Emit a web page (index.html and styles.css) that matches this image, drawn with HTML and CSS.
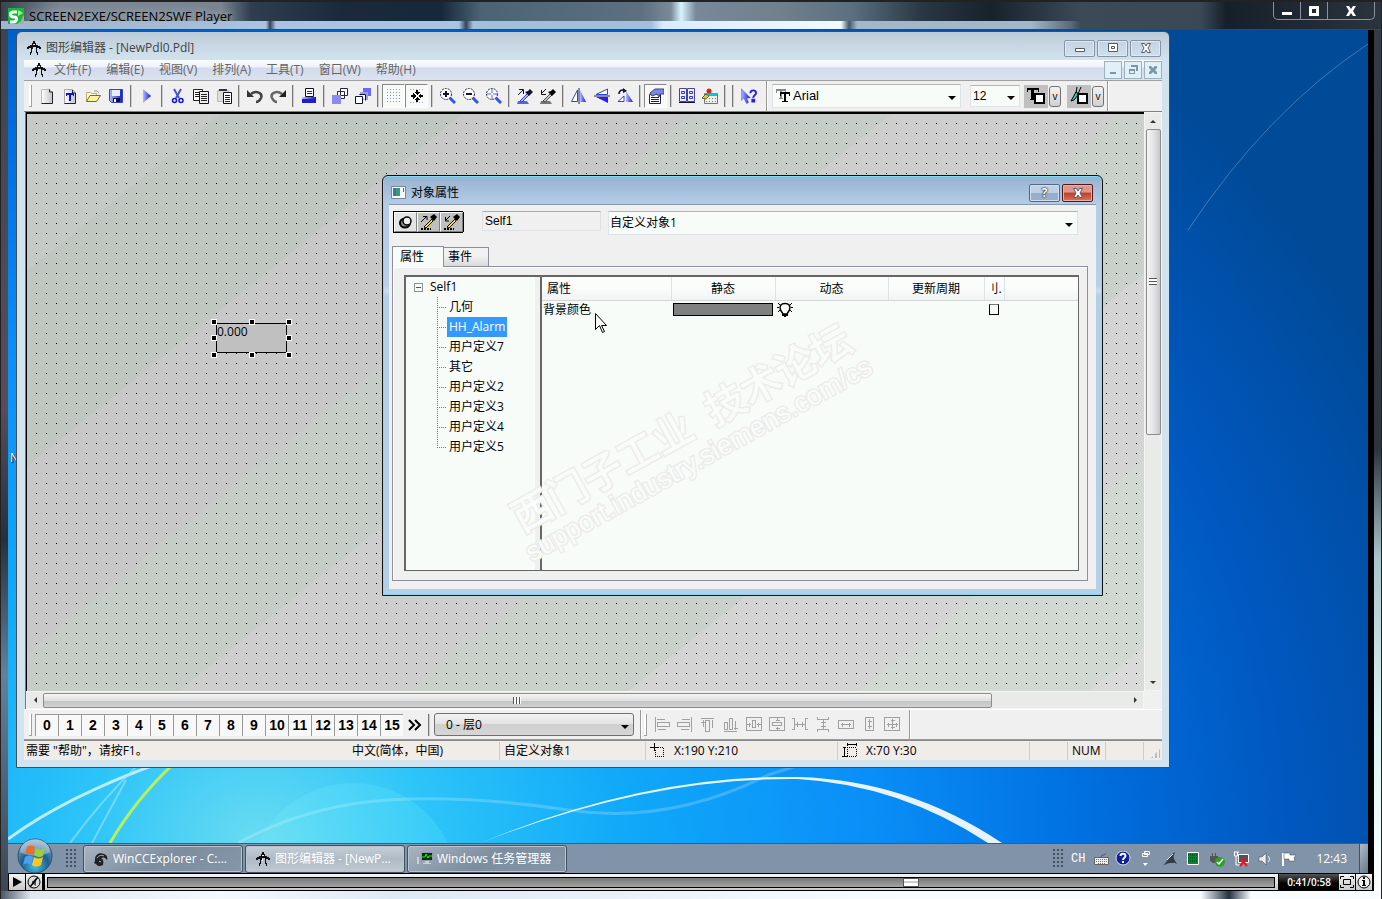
FILE: index.html
```
<!DOCTYPE html>
<html lang="zh-CN">
<head>
  <title>SCREEN2EXE/SCREEN2SWF Player</title>
  <meta charset="UTF-8" />
  <link rel="stylesheet" href="styles.css">
</head>
<body>
  <!-- Icon set -->
  <svg class="defs" width="0" height="0" aria-hidden="true">
    <defs>
      <linearGradient id="gBlue" x1="0" x2="1"><stop offset="0" stop-color="#b4bcff"/><stop offset="1" stop-color="#1414d8"/></linearGradient>
      <linearGradient id="gGrey" x1="0" x2="1"><stop offset="0" stop-color="#fff"/><stop offset="1" stop-color="#c4c4c4"/></linearGradient>
      <radialGradient id="gOrb" cx=".5" cy=".8" r=".8"><stop offset="0" stop-color="#3fc3e8"/><stop offset=".5" stop-color="#1d5f92"/><stop offset="1" stop-color="#8fb0c6"/></radialGradient>
    </defs>
    <symbol id="i-app" viewBox="0 0 16 16"><path d="M7 1h2v2h1v2h2v1h2v1h1v2h-2V8h-2v4h1v3h-1v-2h-1V7H7v2H6v4H5v2H4v-3h1V8H3v1H1V7h1V6h2V5h2V3h1z" fill="#111"/><path d="M7 4h2v1H7zM7 8h1v2H7z" fill="#fff"/></symbol>
    <symbol id="i-new" viewBox="0 0 16 16"><path d="M2.5.5h8l3 3v12h-11z" fill="url(#gGrey)"/><path d="M10.500 1v3h3v11.500h-11" fill="none" stroke="#223"/><path d="M2.500 15V1.500h8" fill="none" stroke="#bbb"/></symbol>
    <symbol id="i-newt" viewBox="0 0 16 16"><path d="M2.500 1.500h8l3 3v11h-11z" fill="url(#gGrey)" stroke="#aaa"/><path d="M10.500 2v3h3v10.500h-11" fill="none" stroke="#223"/><path d="M4 5h8v3h-1V7H9v6H7V7H5v1H4z" fill="#11d"/></symbol>
    <symbol id="i-open" viewBox="0 0 16 16"><path d="M1.500 13V4.500h4l1 1h5v2" fill="#fffbd8" stroke="#b9ac6a"/><path d="M1.500 13.500 5 7.500h10.500l-4 6z" fill="#fff3a0" stroke="#776a33"/><path d="M9 3h3l2 2" fill="none" stroke="#999"/></symbol>
    <symbol id="i-save" viewBox="0 0 16 16"><path d="M1.500 1.500h13v13h-11l-2-2z" fill="url(#gBlue)" stroke="#34c"/><path d="M4 2h8v6H4z" fill="#e8ecff"/><path d="M5 10h7v4H5z" fill="#113"/><path d="M6 11h2v3H6z" fill="#fff"/></symbol>
    <symbol id="i-run" viewBox="0 0 16 16"><path d="M4 1v14l8-7z" fill="url(#gBlue)"/></symbol>
    <symbol id="i-cut" viewBox="0 0 16 16"><path d="M4 1l5 9M11 1 6 10" stroke="#45c" stroke-width="2"/><circle cx="4.500" cy="12.500" r="2" fill="none" stroke="#11d" stroke-width="1.500"/><circle cx="11" cy="12.500" r="2" fill="none" stroke="#11d" stroke-width="1.500"/></symbol>
    <symbol id="i-copy" viewBox="0 0 16 16"><path d="M.5 1.500h9v11h-9z" fill="#fff" stroke="#222"/><path d="M6.500 3.500h9v12h-9z" fill="#eee" stroke="#113"/><path d="M2 4.500h4M2 6.500h4M2 8.500h4M8 6.500h6M8 8.500h6M8 10.500h6M8 12.500h6" stroke="#222"/></symbol>
    <symbol id="i-paste" viewBox="0 0 16 16"><path d="M1.500 2.500h11v11h-11z" fill="#ddd" stroke="#bbb"/><path d="M3 3V1h8v2z" fill="#333"/><path d="M7.500 4.500h8v11h-8z" fill="#fff" stroke="#112"/><path d="M9 7.500h5M9 9.500h5M9 11.500h5M9 13.500h5" stroke="#222"/></symbol>
    <symbol id="i-undo" viewBox="0 0 16 16"><path d="M4 6c5-4 12-1 10 4-1 2-3 4-5 4" fill="none" stroke="#444" stroke-width="2.500"/><path d="M0 2v7h7z" fill="#333"/></symbol>
    <symbol id="i-redo" viewBox="0 0 16 16"><path d="M12 6C7 2 0 5 2 10c1 2 3 4 5 4" fill="none" stroke="#666" stroke-width="2.500"/><path d="M16 2v7H9z" fill="#222"/></symbol>
    <symbol id="i-print" viewBox="0 0 16 16"><path d="M4.500.5h8v8h-8z" fill="#fff" stroke="#113"/><path d="M6 3.500h5M6 5.500h5" stroke="#333"/><path d="M1 9h14v3H1z" fill="url(#gBlue)"/><path d="M1 11h14v4H1z" fill="#2020c8"/></symbol>
    <symbol id="i-front" viewBox="0 0 16 16"><path d="M8.500.5h7v7h-7zM5.500 3.500h7v7h-7z" fill="#fff" stroke="#224"/><path d="M0 7h9v9H0z" fill="#8a8cf4"/></symbol>
    <symbol id="i-back" viewBox="0 0 16 16"><path d="M8 0h8v8H8z" fill="#6a6af4"/><path d="M5 4h8v8H5z" fill="#9a9af8"/><path d="M.5 8.500h7v7h-7zM4.500 6.500h6v6" fill="#fff" stroke="#113"/></symbol>
    <symbol id="i-grid" viewBox="0 0 16 16"><path d="M1 1.500h15M1 4.500h15M1 7.500h15M1 10.500h15M1 13.500h15" stroke="#8a94b8" stroke-dasharray="1 2"/></symbol>
    <symbol id="i-snap" viewBox="0 0 16 16"><path d="M1 1.500h15M1 14.500h15" stroke="#a0a8c8" stroke-dasharray="1 2"/><path d="M8 7 5 4h2V2h2v2h2zM8 9l-3 3h2v2h2v-2h2zM7 8 4 5v2H2v2h2v2zM9 8l3-3v2h2v2h-2v2z" fill="#000"/><path d="M7 7h2v2H7z" fill="#fff"/></symbol>
    <symbol id="i-zin" viewBox="0 0 16 16"><path d="m9 9 6 6" stroke="#35e" stroke-width="3"/><circle cx="6" cy="6" r="5.500" fill="#fff" stroke="#224" stroke-dasharray="2 1"/><path d="M3 6h6M6 3v6" stroke="#113" stroke-width="2"/></symbol>
    <symbol id="i-zout" viewBox="0 0 16 16"><path d="m9 9 6 6" stroke="#35e" stroke-width="3"/><circle cx="6" cy="6" r="5.500" fill="#fff" stroke="#224" stroke-dasharray="2 1"/><path d="M3 6h6" stroke="#113" stroke-width="2"/></symbol>
    <symbol id="i-zarea" viewBox="0 0 16 16"><path d="m9 9 6 6" stroke="#35e" stroke-width="3"/><circle cx="6" cy="6" r="5.500" fill="#fff" stroke="#224" stroke-dasharray="2 1"/><path d="M6 1v4M6 7v4M1 6h4M7 6h4" stroke="#55e"/></symbol>
    <symbol id="i-pick" viewBox="0 0 16 16"><path d="M1 13h9l2 3H0z" fill="#5566dd"/><path d="m3 13 8-8 1 2-7 7z" fill="#aab4ff" stroke="#34c"/><path d="m8 4 4 4 4-4-3-3-2 2z" fill="#113"/><path d="m1 7 5-5M2 1.500h4.500V6" fill="none" stroke="#113"/></symbol>
    <symbol id="i-drop" viewBox="0 0 16 16"><path d="M1 13h9l2 3H0z" fill="#777"/><path d="m3 13 8-8 1 2-7 7z" fill="#ccc" stroke="#444"/><path d="m8 4 4 4 4-4-3-3-2 2z" fill="#000"/><path d="M6 1 1 6M1.500 2v4.500H6" fill="none" stroke="#111"/></symbol>
    <symbol id="i-fliph" viewBox="0 0 16 16"><path d="M6.500 2v11.500h-6z" fill="#fff" stroke="#34c"/><path d="M8 0v16" stroke="#225"/><path d="M9 2v12h6z" fill="url(#gBlue)"/></symbol>
    <symbol id="i-flipv" viewBox="0 0 16 16"><path d="M13.500 1v5.500H2z" fill="#fff" stroke="#34c"/><path d="M0 8h16" stroke="#225"/><path d="M14 9v6L2 9z" fill="#22e"/></symbol>
    <symbol id="i-rot" viewBox="0 0 16 16"><path d="M1 13.500 7 8v5.500z" fill="#fff" stroke="#34c"/><path d="M9 3v11h7z" fill="url(#gBlue)"/><path d="M2 6c0-4 4-5 6-3" fill="none" stroke="#113" stroke-width="1.500"/><path d="M6 0v5l4-2z" fill="#113"/></symbol>
    <symbol id="i-props" viewBox="0 0 16 16"><path d="M1.500 6.500h11v9h-11z" fill="#fff" stroke="#224"/><path d="M3 9.500h8M3 11.500h8M3 13.500h8" stroke="#222"/><path d="M2 5 7 1h9v5h-4l-1 3-2-3-5 2z" fill="#7788ee" stroke="#446"/></symbol>
    <symbol id="i-lib" viewBox="0 0 16 16"><path d="M.5.5h7v13h-7zM8.500.5h7v13h-7z" fill="#eef" stroke="#449"/><path d="M0 14.500h16" stroke="#114"/><path d="M2.500 3.500h3v2h-3zM2.500 8.500h3v2h-3zM10.500 3.500h3v2h-3zM10.500 8.500h3v2h-3z" fill="none" stroke="#33d"/></symbol>
    <symbol id="i-dyn" viewBox="0 0 16 16"><path d="M2.500 5.500h13v10h-13z" fill="#eee" stroke="#777"/><path d="M3 5h12v3H3z" fill="#0cc"/><path d="M4 10.500h10M4 13.500h10" stroke="#777" stroke-dasharray="1 2"/><circle cx="7" cy="3" r="2.500" fill="#d22"/><path d="m0 10 4-4 3 2-3 3z" fill="#dc2" stroke="#663"/></symbol>
    <symbol id="i-help" viewBox="0 0 17 16"><path d="M0 0v13l3-3 3 6 2-1-2-5h4z" fill="url(#gBlue)" stroke="#34c" stroke-width=".5"/><path d="M10 5c0-4 6-4 6 0 0 2-3 2-3 5M12 12h2v2h-2z" fill="none" stroke="#22e" stroke-width="2"/></symbol>
    <symbol id="i-tt" viewBox="0 0 16 16"><path d="M1 1h10v4h-1V3H7v7h1v1H4v-1h1V3H2v2H1z" fill="#888"/><path d="M5 4h10v4h-1V6h-3v7h2v1H7v-1h2V6H6v2H5z" fill="#000"/></symbol>
    <symbol id="i-tbox" viewBox="0 0 20 20"><path d="M1 2h12v4h-1V4H8v9h2v1H4v-1h1V4H2v2H1z" fill="#000"/><path d="M9 8h9v9H9z" fill="#fff" stroke="#000" stroke-width="2"/></symbol>
    <symbol id="i-pen" viewBox="0 0 20 20"><path d="m2 15 5-9 3 2-5 6z" fill="#2cc" stroke="#000"/><path d="M7 7 8 1M9 8l3-7" stroke="#000"/><path d="M9 8h9v9H9z" fill="#fff" stroke="#000" stroke-width="2"/></symbol>
    <symbol id="i-pin" viewBox="0 0 18 16"><ellipse cx="8" cy="9" rx="5" ry="4.500" fill="#888" stroke="#000" stroke-width="2"/><circle cx="10" cy="7" r="4" fill="#eee" stroke="#000" stroke-width="1.500"/></symbol>
    <symbol id="i-ypick" viewBox="0 0 18 16"><path d="M1 15h10" stroke="#000" stroke-dasharray="2 1" stroke-width="2"/><path d="m4 13 8-8 1 2-7 7z" fill="#fe2" stroke="#000"/><path d="m10 3 4 4 3-4-3-3z" fill="#000"/><path d="m1 8 5-5M3 2.500h4V6" fill="none" stroke="#000"/></symbol>
    <symbol id="i-ydrop" viewBox="0 0 18 16"><path d="M1 15h10" stroke="#000" stroke-dasharray="2 1" stroke-width="2"/><path d="m4 13 8-8 1 2-7 7z" fill="#fe2" stroke="#000"/><path d="m10 3 4 4 3-4-3-3z" fill="#000"/><path d="M7 2 3 6M2.500 3v4H6" fill="none" stroke="#000"/></symbol>
    <symbol id="i-dlg" viewBox="0 0 16 14"><path d="M.5.5h14v12H.5z" fill="#f4f8f8" stroke="#789"/><path d="M2 2h7v8H2z" fill="#3a9a78"/><path d="M2 2h3v8H2z" fill="#3a78a8"/><path d="M12 2h1v4h-1z" fill="#285"/></symbol>
    <symbol id="i-bulb" viewBox="0 0 16 16"><path d="M6 12 3.500 8C2 4 4 1.500 8 1.500S14 4 12.500 8L10 12z" fill="#fff" stroke="#000" stroke-width="1.500"/><path d="M5 12h6v2H9v1H7v-1H5z" fill="#000"/><path d="m1 1 2 2M0 5.500h2M1 10l2-2M15 1l-2 2M14 5.500h2M15 10l-2-2" stroke="#000"/></symbol>
    <symbol id="i-al" viewBox="0 0 16 16"><path d="M1.500 0v15M3 2.500h8M3.500 5.500h12v4h-12zM3.500 12.500h8" /></symbol>
    <symbol id="i-ar" viewBox="0 0 16 16"><path d="M14.500 0v15M13 2.500H5M.5 5.500h12v4H.5zM12 12.500H4" /></symbol>
    <symbol id="i-at" viewBox="0 0 16 16"><path d="M1 1.500h13M3.500 3v7M5.500 3.500h4v11h-4zM12.500 3v8M1 5h4" /></symbol>
    <symbol id="i-ab" viewBox="0 0 16 16"><path d="M1 14.500h13M1.500 5.500h3v7h-3zM6.500 1.500h3v11h-3zM12.500 4v9M11 11h4" /></symbol>
    <symbol id="i-ch" viewBox="0 0 16 16"><path d="M.5.5h15v13H.5zM6.500 3.500h3v7h-3zM1 7.500h4M11 7.500h4M3.500 5.500v4M12.500 5.500v4" /></symbol>
    <symbol id="i-cv" viewBox="0 0 16 16"><path d="M.5.5h15v13H.5zM3.500 5.500h9v3h-9zM8.500 1v3M8.500 10v3M6.500 3h4M6.500 11.500h4" /></symbol>
    <symbol id="i-dh" viewBox="0 0 16 16"><path d="M0 1.500h2.500v11H0M16 1.500h-2.500v11H16M3 7.500h10M5.500 5v5M10.500 5v5" /></symbol>
    <symbol id="i-dv" viewBox="0 0 16 16"><path d="M2.500 0v2.500h11V0M2.500 15v-2.500h11V15M8.500 3v9M6 5.500h5M6 9.500h5" /></symbol>
    <symbol id="i-sw" viewBox="0 0 16 16"><path d="M.5 3.500h15v8H.5zM3 7.500h10M4.500 5.500v4M11.500 5.500v4" /></symbol>
    <symbol id="i-sh" viewBox="0 0 16 16"><path d="M4.500.5h8v13h-8zM8.500 2v10M6.500 4.500h4M6.500 9.500h4" /></symbol>
    <symbol id="i-sb" viewBox="0 0 16 16"><path d="M.5.5h15v13H.5zM8.500 2v10M3 7.500h11M6.500 3.500h4M6.500 10.500h4M4.500 5.500v4M12.500 5.500v4" /></symbol>
    <symbol id="i-pos" viewBox="0 0 16 16"><path d="M0 4.500h8M4.500 0v8" stroke="#000"/><path d="M5 13.500h9M13.500 5v9M5.500 7v7M8 4.500h6" stroke="#000" stroke-dasharray="1 1"/></symbol>
    <symbol id="i-size" viewBox="0 0 16 16"><path d="M5 1.500h10M5.500 0v3M14.500 0v3M2.500 4v9M1 4.500h3M0 13.500h5" stroke="#000"/><path d="M5 4.500h9v9H5z" fill="none" stroke="#000" stroke-dasharray="1 1"/></symbol>
    <symbol id="i-bird" viewBox="0 0 16 16"><path d="M2 8c0-4 4-7 9-5 3 1 4 4 3 6-2-3-4-3-6-2 2 1 3 3 2 7-3 2-6 1-7-1l-2-1 1-2z" fill="#222"/><path d="M4 7c2-3 5-3 7-2M6 10l2 1" stroke="#bbb" fill="none"/></symbol>
    <symbol id="i-mon" viewBox="0 0 16 16"><path d="M4 1h12v9H4z" fill="#99a"/><path d="M5 2h10v7H5z" fill="#031"/><path d="M5 6h3l1-3 2 4 1-2h3" fill="none" stroke="#2e3"/><path d="M8 10h4v2h2v1H6v-1h2zM0 6h2v7H0z" fill="#ccd"/></symbol>
    <symbol id="i-orb" viewBox="0 0 36 36"><circle cx="18" cy="18" r="17" fill="url(#gOrb)" stroke="#34506a"/><path d="M3 14a15 13 0 0 1 30 0c-9 5-21 5-30 0z" fill="#fff" opacity=".35"/><path d="M10 9c3-2 5-2 8 0l-2 8c-3-2-5-2-8 0z" fill="#f06a2a"/><path d="M19 10c3 2 6 2 9 0l-2 8c-3 2-6 1-9-1z" fill="#9ccf3a"/><path d="M8 19c3-2 5-2 8 0l-2 8c-3-2-5-2-8 0z" fill="#4aa2ee"/><path d="M17 19c3 2 6 2 9 0l-2 8c-3 2-6 2-9 0z" fill="#fcc624"/></symbol>
  </svg>

  <div class="player">
    <header class="player-title">
      <svg class="logo" viewBox="0 0 16 16"><path d="M0 0h16v16H0z" fill="#17b83a"/><path d="M8 16c6-1 5-6 8-9v9z" fill="#aaa"/><path d="M9 4H5C1 5 2 9 6 9s3 4 0 5H2" fill="none" stroke="#fff" stroke-width="3"/><path d="m10 2 5 3-5 3z" fill="#8f8"/></svg>
      <span class="glow">SCREEN2EXE/SCREEN2SWF Player</span>
      <div class="frame-btns">
        <button aria-label="Minimize"><svg viewBox="0 0 14 12"><path d="M2 7h10v3H2z"/></svg></button>
        <button aria-label="Maximize"><svg viewBox="0 0 14 12"><path d="M2 1h10v10H2zM5 4v4h4V4z" fill-rule="evenodd"/></svg></button>
        <button class="wide" aria-label="Close"><svg viewBox="0 0 14 12"><path d="M2 1h3l2 3 2-3h3L9 6l3 5H9L7 8l-2 3H2l3-5z"/></svg></button>
      </div>
    </header>

    <div class="screen">
      <main class="desktop">
        <svg class="wallpaper" viewBox="0 0 1360 813" preserveAspectRatio="xMidYMax slice" aria-hidden="true">
          <g fill="none" stroke="#fff">
            <path d="M0 809Q60 765 160 730" stroke="#b8ecff" stroke-width="3"/>
            <path d="M62 813Q95 768 140 725M84 813 118 750" stroke="#9be4ff" stroke-width="2" opacity=".6"/>
            <path d="M102 813Q130 765 175 725" stroke="#b6f060" stroke-width="3"/>
            <path d="M230 813Q300 775 380 770T560 780 760 745L900 700" stroke-width="3" opacity=".2"/>
            <path d="M1180 200Q1260 80 1360 14" opacity=".25"/>
          </g>
          <path d="M472 813Q640 744 790 747 900 750 994 813H980Q892 755 790 749 640 747 472 813z" fill="#fff" opacity=".9"/>
          <circle cx="345" cy="858" r="105" fill="#8ff" opacity=".15"/>
        </svg>
        <span class="desk-label">N</span>

        <section class="app">
          <header class="app-title">
            <svg class="ic px"><use href="#i-app"/></svg>
            <span>图形编辑器 - [NewPdl0.Pdl]</span>
            <div class="aero-btns">
              <button aria-label="最小化"><svg viewBox="0 0 14 12"><path d="M2.500 6.500h9v3h-9z"/></svg></button>
              <button aria-label="最大化"><svg viewBox="0 0 14 12"><path d="M2.500 1.500h9v8h-9zM5.500 4.500h3v2h-3z"/></svg></button>
              <button aria-label="关闭"><svg viewBox="0 0 14 12"><path d="M2.500 1.500h3L7 4l1.500-2.500h3L9 6l2.500 4.500h-3L7 8l-1.500 2.500h-3L5 6z"/></svg></button>
            </div>
          </header>
          <nav class="menu">
            <svg class="ic px"><use href="#i-app"/></svg>
            <button>文件(F)</button><button>编辑(E)</button><button>视图(V)</button><button>排列(A)</button><button>工具(T)</button><button>窗口(W)</button><button>帮助(H)</button>
            <div class="mdi-btns">
              <button aria-label="最小化"><svg viewBox="0 0 12 12"><path d="M3 8h6v2H3z"/></svg></button>
              <button aria-label="还原"><svg viewBox="0 0 12 12"><path d="M4 1h7v6H9V3H4zM2 5h6v5H2zM3 7v2h4V7z" fill-rule="evenodd"/></svg></button>
              <button aria-label="关闭"><svg viewBox="0 0 12 12"><path d="M2 2h2l2 2 2-2h2v2L8 6l2 2v2H8L6 8l-2 2H2V8l2-2-2-2z"/></svg></button>
            </div>
          </nav>

          <div class="toolbar">
            <i class="grip"></i>
            <button aria-label="新建"><svg class="ic"><use href="#i-new"/></svg></button>
            <button aria-label="模板"><svg class="ic"><use href="#i-newt"/></svg></button>
            <button aria-label="打开"><svg class="ic"><use href="#i-open"/></svg></button>
            <button aria-label="保存"><svg class="ic"><use href="#i-save"/></svg></button>
            <i class="sep"></i>
            <button aria-label="运行"><svg class="ic"><use href="#i-run"/></svg></button>
            <i class="sep"></i>
            <button aria-label="剪切"><svg class="ic"><use href="#i-cut"/></svg></button>
            <button aria-label="复制"><svg class="ic"><use href="#i-copy"/></svg></button>
            <button aria-label="粘贴"><svg class="ic"><use href="#i-paste"/></svg></button>
            <i class="sep"></i>
            <button aria-label="撤销"><svg class="ic"><use href="#i-undo"/></svg></button>
            <button aria-label="重做"><svg class="ic"><use href="#i-redo"/></svg></button>
            <i class="sep"></i>
            <button aria-label="打印"><svg class="ic"><use href="#i-print"/></svg></button>
            <i class="sep"></i>
            <button aria-label="置前"><svg class="ic"><use href="#i-front"/></svg></button>
            <button aria-label="置后"><svg class="ic"><use href="#i-back"/></svg></button>
            <i class="sep"></i>
            <button class="down" aria-label="网格"><svg class="ic px"><use href="#i-grid"/></svg></button>
            <button class="down" aria-label="对齐网格"><svg class="ic px"><use href="#i-snap"/></svg></button>
            <i class="sep"></i>
            <button aria-label="放大"><svg class="ic"><use href="#i-zin"/></svg></button>
            <button aria-label="缩小"><svg class="ic"><use href="#i-zout"/></svg></button>
            <button aria-label="区域"><svg class="ic"><use href="#i-zarea"/></svg></button>
            <i class="sep"></i>
            <button aria-label="复制属性"><svg class="ic"><use href="#i-pick"/></svg></button>
            <button aria-label="分配属性"><svg class="ic"><use href="#i-drop"/></svg></button>
            <i class="sep"></i>
            <button aria-label="水平镜像"><svg class="ic"><use href="#i-fliph"/></svg></button>
            <button aria-label="垂直镜像"><svg class="ic"><use href="#i-flipv"/></svg></button>
            <button aria-label="旋转"><svg class="ic"><use href="#i-rot"/></svg></button>
            <i class="sep"></i>
            <button class="down" aria-label="属性"><svg class="ic"><use href="#i-props"/></svg></button>
            <i class="sep"></i>
            <button aria-label="库"><svg class="ic"><use href="#i-lib"/></svg></button>
            <button aria-label="动态向导"><svg class="ic"><use href="#i-dyn"/></svg></button>
            <i class="sep"></i><i class="sep"></i>
            <button aria-label="帮助"><svg class="ic"><use href="#i-help"/></svg></button>
            <i class="edge"></i>
            <div class="combo font-combo">
              <svg class="ic px"><use href="#i-tt"/></svg>
              <select aria-label="字体"><option>Arial</option></select>
            </div>
            <div class="combo size-combo"><select aria-label="字号"><option>12</option></select></div>
            <button class="swatch-btn" aria-label="文字颜色"><svg><use href="#i-tbox"/></svg></button>
            <button class="drop-btn">v</button>
            <button class="swatch-btn second" aria-label="线条颜色"><svg><use href="#i-pen"/></svg></button>
            <button class="drop-btn">v</button>
            <i class="end"></i>
          </div>

          <div class="work">
            <div class="canvas">
              <div class="obj">0.000<b></b><b></b><b></b><b></b><b></b><b></b><b></b><b></b></div>
            </div>
            <div class="vscroll"><i class="arrow up"></i><div class="thumb"></div><i class="arrow dn"></i></div>
            <div class="hscroll"><i class="arrow lf"></i><div class="thumb"></div><i class="arrow rt"></i></div>
          </div>

          <div class="layerbar">
            <i class="grip"></i>
            <div class="layers">
              <button>0</button><button>1</button><button>2</button><button>3</button><button>4</button><button>5</button><button>6</button><button>7</button><button>8</button><button>9</button><button>10</button><button>11</button><button>12</button><button>13</button><button>14</button><button>15</button>
            </div>
            <button class="more" aria-label="更多"><svg viewBox="0 0 14 12"><path d="m1 1 5 5-5 5M7 1l5 5-5 5" fill="none" stroke="#000" stroke-width="2"/></svg></button>
            <i class="sep"></i>
            <div class="combo layer-combo"><select aria-label="图层"><option>0 - 层0</option></select></div>
            <i class="edge"></i>
            <i class="grip"></i>
            <div class="align">
              <button aria-label="左对齐" disabled><svg class="ic"><use href="#i-al"/></svg></button>
              <button aria-label="右对齐" disabled><svg class="ic"><use href="#i-ar"/></svg></button>
              <button aria-label="上对齐" disabled><svg class="ic"><use href="#i-at"/></svg></button>
              <button aria-label="下对齐" disabled><svg class="ic"><use href="#i-ab"/></svg></button>
              <button aria-label="水平居中" disabled><svg class="ic"><use href="#i-ch"/></svg></button>
              <button aria-label="垂直居中" disabled><svg class="ic"><use href="#i-cv"/></svg></button>
              <button aria-label="水平间距" disabled><svg class="ic"><use href="#i-dh"/></svg></button>
              <button aria-label="垂直间距" disabled><svg class="ic"><use href="#i-dv"/></svg></button>
              <button aria-label="等宽" disabled><svg class="ic"><use href="#i-sw"/></svg></button>
              <button aria-label="等高" disabled><svg class="ic"><use href="#i-sh"/></svg></button>
              <button aria-label="等宽高" disabled><svg class="ic"><use href="#i-sb"/></svg></button>
            </div>
            <i class="end"></i>
          </div>

          <footer class="status">
            <span class="s-help">需要 "帮助"，请按F1。</span>
            <span class="s-lang">中文(简体，中国)</span>
            <span class="s-obj">自定义对象1</span>
            <span class="s-pos"><svg class="ic px"><use href="#i-pos"/></svg>X:190 Y:210</span>
            <span class="s-pos"><svg class="ic px"><use href="#i-size"/></svg>X:70 Y:30</span>
            <span class="s-key"></span>
            <span class="s-key">NUM</span>
            <span class="s-key"></span>
            <span class="s-grip"><i></i></span>
          </footer>
        </section>

        <!-- Object properties -->
        <section class="dialog">
          <header class="dialog-title">
            <svg class="dlg-ic"><use href="#i-dlg"/></svg>
            <span>对象属性</span>
            <button class="q" aria-label="帮助">?</button>
            <button class="x" aria-label="关闭"><svg viewBox="0 0 14 12"><path d="M2.500 1.500h3L7 4l1.500-2.500h3L9 6l2.500 4.500h-3L7 8l-1.500 2.500h-3L5 6z"/></svg></button>
          </header>
          <div class="dialog-body">
            <div class="dialog-top">
              <div class="tools">
                <button class="down" aria-label="固定"><svg><use href="#i-pin"/></svg></button>
                <button aria-label="复制属性"><svg><use href="#i-ypick"/></svg></button>
                <button aria-label="分配属性"><svg><use href="#i-ydrop"/></svg></button>
              </div>
              <input class="type" type="text" value="Self1" aria-label="类型" readonly>
              <div class="combo obj-combo"><select aria-label="对象"><option>自定义对象1</option></select></div>
            </div>
            <div class="tabs">
              <button class="active">属性</button><button>事件</button>
            </div>
            <div class="panel">
              <div class="split">
                <div class="tree">
                  <div class="root"><i class="minus"></i>Self1</div>
                  <ul>
                    <li><span>几何</span></li>
                    <li><span class="sel">HH_Alarm</span></li>
                    <li><span>用户定义7</span></li>
                    <li><span>其它</span></li>
                    <li><span>用户定义2</span></li>
                    <li><span>用户定义3</span></li>
                    <li><span>用户定义4</span></li>
                    <li><span>用户定义5</span></li>
                  </ul>
                </div>
                <div class="list">
                  <table>
                    <colgroup><col class="c1"><col class="c2"><col class="c3"><col class="c4"><col class="c5"><col></colgroup>
                    <thead>
                      <tr><th class="first">属性</th><th>静态</th><th>动态</th><th>更新周期</th><th>刂.</th><th></th></tr>
                    </thead>
                    <tbody>
                      <tr><td>背景颜色</td><td><div class="color"></div></td><td><svg class="bulb"><use href="#i-bulb"/></svg></td><td></td><td><input type="checkbox" aria-label="间接"></td><td></td></tr>
                    </tbody>
                  </table>
                </div>
              </div>
            </div>
          </div>
        </section>

        <div class="watermark">
          <div class="cn">西门子工业&nbsp; 技术论坛</div>
          <div class="en">support.industry.siemens.com/cs</div>
        </div>
        <svg class="cursor" viewBox="0 0 12 20"><path d="M.5.5v16l4-4 3 7 2-1-3-6h5z" fill="#fff" stroke="#000"/></svg>
      </main>

      <div class="taskbar">
        <button class="start" aria-label="开始"><svg><use href="#i-orb"/></svg></button>
        <i class="dots"></i>
        <div class="tasks">
          <button><svg class="ic"><use href="#i-bird"/></svg>WinCCExplorer - C:...</button>
          <button class="active"><svg class="ic px"><use href="#i-app"/></svg>图形编辑器 - [NewP...</button>
          <button><svg class="ic"><use href="#i-mon"/></svg>Windows 任务管理器</button>
        </div>
        <div class="tray">
          <i class="dots"></i>
          <span class="lang">CH</span>
          <svg class="tight" viewBox="0 0 16 16"><path d="M1.500 6.500h14v7h-14z" fill="#eee" stroke="#666"/><path d="M3 8.500h11M3 10.500h11M5 12.500h7" stroke="#777" stroke-dasharray="1 1"/><path d="M8 6c0-3 4-1 5-4" fill="none" stroke="#555"/></svg>
          <svg class="tight" viewBox="0 0 16 16"><circle cx="8" cy="7" r="7" fill="#10209a" stroke="#dde"/><path d="M5.500 5c0-3 5-3 5 0 0 2-2.500 1.500-2.500 4M8 10v2" fill="none" stroke="#fff" stroke-width="2"/></svg>
          <svg viewBox="0 0 16 16"><path d="M7.500.5h5v3h-5zM5.500 2.500h5v3h-5z" fill="#8093a8" stroke="#fff"/><path d="m6 12 2 3 3-3z" fill="#fff"/></svg>
          <svg viewBox="0 0 16 16"><path d="M0 15c4-1 5-4 8-8 2-3 4-5 6-6-1 3-2 4-1 7l3 5c-3-2-4-1-6-1-4 0-6 2-10 3z" fill="#333c46"/><path d="m6 9 6-6" stroke="#cde"/></svg>
          <svg viewBox="0 0 16 16"><path d="M2.500 1.500h11v12h-11z" fill="#083" stroke="#fff"/><path d="M3 4h10M3 7h10M3 10h10" stroke="#031" stroke-dasharray="1 1"/></svg>
          <svg viewBox="0 0 16 16"><path d="M1 5h8v5l-2 2H4l-3-2zM3 2h1v3H3zM6 2h1v3H6z" fill="#555"/><circle cx="11" cy="11" r="5" fill="#2aa02a"/><path d="m8 11 2 2 4-5" fill="none" stroke="#fff" stroke-width="1.500"/></svg>
          <svg viewBox="0 0 16 16"><path d="M5.500 3.500h10v8h-10z" fill="#456" stroke="#fff"/><path d="M1 1h5M1.500 1v4h3V1M3 5v9h5" fill="none" stroke="#fff"/><path d="m7 7 7 8M14 7l-7 8" stroke="#e01818" stroke-width="2"/></svg>
          <svg viewBox="0 0 16 16"><path d="M2 6h3l4-4v12l-4-4H2z" fill="#eee" stroke="#444" stroke-width=".5"/><path d="M11 5c2 2 2 4 0 6" fill="none" stroke="#fff"/></svg>
          <svg viewBox="0 0 16 16"><path d="M1 2h2v13H1z" fill="#fff"/><path d="M3 2h6v2h6l-2 3 1 3H8V8H3z" fill="#fff" stroke="#444" stroke-width=".5"/></svg>
          <time>12:43</time>
        </div>
        <button class="peek" aria-label="显示桌面"></button>
      </div>
    </div>

    <div class="controls">
      <button aria-label="Play"><svg viewBox="0 0 16 14"><path d="M4 2v10l9-5z"/></svg></button>
      <button aria-label="Mute"><svg viewBox="0 0 16 14"><circle cx="8" cy="7" r="6" fill="#ddd" stroke="#000"/><path d="M6 6h1l3-3v8L7 9H6z" fill="#555"/><path d="M4 12l8-10" stroke="#000" stroke-width="1.500"/></svg></button>
      <div class="track"><input type="range" min="0" max="58" value="41" aria-label="Position"></div>
      <output>0:41/0:58</output>
      <button aria-label="Full screen"><svg viewBox="0 0 16 14"><path d="M4.500 4.500h7v5h-7zM1.500 4V1.500H5M11 1.500h3.500V4M1.500 10v2.500H5M11 12.500h3.500V10" fill="none" stroke="#000"/></svg></button>
      <button aria-label="Info"><svg viewBox="0 0 16 14"><circle cx="8" cy="7" r="6" fill="#eee" stroke="#000"/><path d="M7 2h2v2H7zM6 5h3v5h1v1H6v-1h1V6H6z"/></svg></button>
    </div>
  </div>
</body>
</html>
```
FILE: styles.css
```
* {
  box-sizing: border-box;
}

body {
  margin: 0;
  font-family: "Open Sans", "Noto Sans CJK SC", sans-serif;
  font-size: 12px;
  line-height: 16px;
  color: #000;
}

button, select, input {
  font: inherit;
  color: inherit;
  margin: 0;
  padding: 0;
  border: 0;
  border-radius: 0;
  background: none;
}

button {
  display: flex;
  align-items: center;
  justify-content: center;
  white-space: nowrap;
}

svg {
  display: block;
  flex: none;
}

.defs {
  position: absolute;
}

.ic {
  width: 16px;
  height: 16px;
}

.px {
  shape-rendering: crispEdges;
}

/* Player frame */
.player {
  height: 100vh;
  display: flex;
  flex-direction: column;
  padding: 0 7px 8px;
  background:
    linear-gradient(90deg, #4a5666 0, #dfe8f0 30px, #f4f9fd 220px, #dce9f6 400px, #f8fcff 900px, #f8fcff 1200px, #234 1228px, #f8fcff 1250px) bottom / 100% 8px no-repeat,
    linear-gradient(#3a4450, #5a4c5c 45%, #27303a 60%, #64809c 75%, #3a4450) left / 8px 100% no-repeat,
    linear-gradient(#333c46, #2c343e 50%, #a8c4cc 62%, #d8f4f4 80%, #fff) right / 8px 100% no-repeat,
    #333;
  border: 1px solid #222;
  border-width: 0 1px;
}

.player-title {
  display: flex;
  align-items: center;
  gap: 5px;
  height: 30px;
  flex: none;
  margin: 0 -7px;
  padding-left: 7px;
  border-top: 2px solid #222;
  border-bottom: 1px solid #444;
  background:
    linear-gradient(90deg, #9fb6d0 0, #a8c4e0 265px, #33445a 269px, #a9c3e2 275px, #a9c3e2 458px, #33445a 465px, #a2c0dc 472px, #a2c0dc 650px, #d8ecff 662px, #f0faff 840px, #445868 848px, #a2b6cc 856px, #a2b6cc 1030px, #5a6a7a 1070px, transparent 1080px) bottom / 100% 8px no-repeat,
    linear-gradient(90deg, #39434f 0, #7c8895 60px, #79848f 220px, #2f3f50 250px, #1a2a3a 340px, #16283a 440px, #4a6474 480px, #5c7080 640px, #7a8a98 670px, #d8f4ff 680px, #78889a 695px, #70808c 780px, #5b7080 850px, #2a3844 920px, #16222c 990px, #3c4a58 1080px, #3a4856 1200px, #16202a 1225px, #2b333d);
}

.logo {
  width: 16px;
  height: 16px;
}

.glow {
  font-size: 13px;
  text-shadow: 0 0 8px #aab4be, 0 0 8px #aab4be;
}

.frame-btns {
  display: flex;
  align-self: flex-start;
  margin-left: auto;
  margin-right: 6px;
  height: 18px;
  border: 1px solid #8b929a;
  border-top: 0;
  border-radius: 0 0 5px 5px;
}

.frame-btns button {
  width: 27px;
  border-right: 1px solid #8b929a;
}

.frame-btns .wide {
  width: 46px;
  border: 0;
}

.frame-btns svg {
  width: 14px;
  height: 12px;
  fill: #fff;
}

.screen {
  flex: 1;
  display: flex;
  flex-direction: column;
  min-height: 0;
  border-right: 6px solid #000;
}

/* Desktop */
.desktop {
  position: relative;
  flex: 1;
  min-height: 0;
  overflow: hidden;
  background: radial-gradient(ellipse 1250px 1100px at 250px 100%, #6adcf2 0, #2cc4f8 14%, #10a8f8 30%, #0a90f8 48%, #0070e0 66%, #0058c0 82%, #004a98 100%);
}

.wallpaper {
  position: absolute;
  width: 100%;
  height: 100%;
}

.desk-label {
  position: absolute;
  left: 2px;
  top: 420px;
  color: #fff;
  text-shadow: 1px 1px 1px #000;
}

/* Editor window */
.app {
  position: absolute;
  left: 8px;
  top: 1px;
  right: 198px;
  bottom: 75px;
  display: flex;
  flex-direction: column;
  padding: 0 7px 7px;
  border: 1px solid #454c52;
  border-radius: 6px 6px 0 0;
  background: linear-gradient(#bccbd6, #d2e3f0 28px, #d0e3ee);
}

.app-title {
  display: flex;
  align-items: center;
  gap: 4px;
  height: 28px;
  flex: none;
  padding-top: 4px;
  padding-left: 2px;
  color: #444;
}

.aero-btns {
  display: flex;
  gap: 2px;
  margin-left: auto;
  margin-right: 1px;
}

.aero-btns button {
  width: 31px;
  height: 17px;
  border: 1px solid #8792ab;
  border-radius: 2px;
  box-shadow: inset 0 0 0 1px #dfe9f2;
}

.aero-btns svg, .dialog-title .x svg {
  width: 14px;
  height: 12px;
  fill: #fff;
  stroke: #555c66;
}

.menu {
  display: flex;
  align-items: center;
  gap: 15px;
  height: 20px;
  flex: none;
  padding-left: 7px;
  color: #666;
  background: linear-gradient(#fbfdfd, #eef2f8 35%, #d3daeb 40%, #dbe3f1);
}

.menu > svg {
  margin-right: -8px;
}

.mdi-btns {
  display: flex;
  gap: 2px;
  margin-left: auto;
}

.mdi-btns button {
  width: 18px;
  height: 18px;
  border: 1px solid #9db1bf;
  background: #e0f0f8;
}

.mdi-btns svg {
  width: 12px;
  height: 12px;
  fill: #7c97a8;
}

.toolbar {
  display: flex;
  align-items: center;
  height: 32px;
  flex: none;
  border-top: 1px solid #a0a0a0;
  border-bottom: 1px solid #808080;
  background: #f0f0f0;
}

.toolbar button {
  width: 23px;
  height: 24px;
  flex: none;
}

.toolbar .down {
  border: 1px solid #fff;
  border-top-color: #888;
  border-left-color: #888;
  background: #f8faf8;
}

.grip {
  width: 3px;
  height: 22px;
  margin: 0 3px 0 5px;
  border-right: 1px solid #a0a0a0;
  border-bottom: 1px solid #a0a0a0;
  background: #fff;
}

.sep {
  width: 2px;
  height: 22px;
  margin: 0 3px;
  border-left: 1px solid #777;
  background: #ccc;
}

.edge, .end {
  width: 2px;
  align-self: stretch;
  border-left: 1px solid #999;
  background: #fff;
}

.toolbar .edge {
  margin: 0 4px 0 6px;
}

.toolbar .end {
  margin-left: 3px;
}

.combo {
  position: relative;
  display: flex;
  align-items: center;
  background: #f8fcf8;
  border: 1px solid #dde3e6;
  border-top-color: #b4b4b4;
}

.combo select {
  appearance: none;
  flex: 1;
  width: 100%;
}

.combo::after {
  content: "";
  position: absolute;
  right: 4px;
  top: 50%;
  border: 4px solid transparent;
  border-top-color: #000;
  border-bottom: 0;
  pointer-events: none;
}

.font-combo {
  width: 189px;
  height: 24px;
  padding-left: 2px;
  gap: 2px;
  font-size: 13px;
}

.font-combo select, .size-combo select {
  font-family: "Liberation Sans", sans-serif;
}

.size-combo {
  width: 50px;
  height: 22px;
  margin: 0 4px 0 9px;
  padding-left: 2px;
}

.toolbar .swatch-btn {
  width: 24px;
  height: 23px;
  background: #c0c0c0;
}

.swatch-btn svg {
  width: 20px;
  height: 20px;
}

.toolbar .second {
  margin-left: 6px;
}

.toolbar .drop-btn {
  width: 12px;
  height: 21px;
  margin-left: 1px;
  font-size: 10px;
  border: 1px solid #707070;
  border-radius: 3px;
  background: linear-gradient(#f2f2f2, #d0d0d0);
}

.work {
  flex: 1;
  min-height: 0;
  display: grid;
  grid-template-columns: 1fr 18px;
  grid-template-rows: 1fr 18px;
  margin-left: 1px;
  border-left: 1px solid #777;
  background: #f0f0f0;
}

.canvas {
  position: relative;
  border-top: 2px solid #000;
  border-left: 1px solid #000;
  background:
    conic-gradient(from 0deg at 1px 1px, transparent 75%, #000 0) 9px 9px / 10px 10px,
    linear-gradient(141deg, #c6cac6 122px, #c0c6c0 0 274px, #c8c8c8 0 419px, #c6ccc6 0 544px, #cecece 0 688px, #cad0ca 0 827px, #d4d4d4 0 972px, #d2d8d2 0 1117px, #dadada 0);
}

.obj {
  position: absolute;
  left: 189px;
  top: 209px;
  width: 71px;
  height: 30px;
  border: 1px solid #000;
  background: #c0c0c0;
}

.obj b {
  position: absolute;
  width: 6px;
  height: 6px;
  border: 1px solid #fff;
  background: #000;
  transform: translate(-50%, -50%);
}

.obj b:nth-child(-n+3) { top: -2px; }
.obj b:nth-child(n+4):nth-child(-n+5) { top: 50%; }
.obj b:nth-child(n+6) { top: calc(100% + 3px); }
.obj b:nth-child(1), .obj b:nth-child(4), .obj b:nth-child(6) { left: -3px; }
.obj b:nth-child(2), .obj b:nth-child(7) { left: 50%; }
.obj b:nth-child(3), .obj b:nth-child(5), .obj b:nth-child(8) { left: calc(100% + 3px); }

.vscroll, .hscroll {
  display: flex;
  align-items: center;
  background: #e8ebe8;
  border: 1px solid #f4f4f4;
}

.vscroll {
  flex-direction: column;
}

.arrow {
  display: flex;
  align-items: center;
  justify-content: center;
  width: 16px;
  height: 16px;
  flex: none;
}

.arrow::before {
  content: "";
  border: 3px solid transparent;
}

.up::before { border-bottom-color: #333; border-top: 0; }
.dn::before { border-top-color: #333; border-bottom: 0; }
.lf::before { border-right-color: #333; border-left: 0; }
.rt::before { border-left-color: #333; border-right: 0; }

.vscroll .dn {
  margin-top: auto;
}

.hscroll .rt {
  margin-left: auto;
}

.thumb {
  display: flex;
  align-items: center;
  justify-content: center;
  border: 1px solid #8c8c8c;
  border-radius: 2px;
}

.thumb::before {
  content: "";
  width: 8px;
  height: 7px;
  background: repeating-linear-gradient(90deg, #555 0 1px, #fff 1px 3px);
}

.vscroll .thumb {
  width: 15px;
  height: 53%;
  background: linear-gradient(90deg, #f4f4f4, #e4e4e6 50%, #c4c6ca);
}

.vscroll .thumb::before {
  background: repeating-linear-gradient(#555 0 1px, #fff 1px 3px);
}

.hscroll .thumb {
  width: 85%;
  height: 15px;
  background: linear-gradient(#f4f4f4, #e0e0e2 50%, #c2c4c6 55%, #cfd1d3);
}

/* Layer bar */
.layerbar {
  display: flex;
  align-items: center;
  height: 31px;
  flex: none;
  border-top: 1px solid #fff;
  border-bottom: 1px solid #999;
  background: #f0f0f0;
}

.layers, .align {
  display: flex;
}

.layers button {
  width: 23px;
  height: 22px;
  font: bold 14px "Liberation Sans", sans-serif;
  border-left: 1px solid #999;
  border-top: 1px solid #999;
  background: #f8f8f8;
}

.more {
  width: 23px;
}

.more svg {
  width: 14px;
  height: 12px;
}

.layerbar .sep {
  margin: 0 4px 0 2px;
}

.layer-combo {
  width: 200px;
  height: 23px;
  padding-left: 11px;
  border: 1px solid #707070;
  border-radius: 3px;
  background: linear-gradient(#f2f2f2, #e4e4e4 45%, #cfcfcf 50%, #d6d6d6);
}

.layerbar .edge {
  margin-left: 6px;
}

.layerbar .edge + .grip {
  margin: 0 3px 0 2px;
}

.align button {
  width: 23px;
}

.align svg {
  fill: none;
  stroke: #a0a0a0;
  shape-rendering: crispEdges;
}

.layerbar .end {
  margin-left: 6px;
}

.status {
  display: flex;
  height: 20px;
  flex: none;
  padding: 1px 0 0 2px;
  border-top: 1px solid #888;
  background: #f0ece8;
}

.status span {
  display: flex;
  align-items: center;
  padding-left: 4px;
  border-left: 1px solid #ccc;
  white-space: nowrap;
}

.status .s-help { flex: 1; padding-left: 0; border: 0; }
.status .s-lang { width: 147px; padding-left: 0; border: 0; }
.status .s-obj { width: 146px; }
.status .s-pos { width: 192px; gap: 8px; }
.status .s-key { width: 38px; }
.status .s-grip { width: 19px; align-items: flex-end; justify-content: flex-end; }

.s-grip i {
  width: 9px;
  height: 9px;
  margin: 0 2px 2px 0;
  background: repeating-linear-gradient(90deg, #bbb 0 2px, transparent 2px 4px);
  clip-path: polygon(100% 0, 100% 100%, 0 100%);
}

/* Dialog */
.dialog {
  position: absolute;
  left: 374px;
  top: 145px;
  width: 721px;
  height: 421px;
  display: flex;
  flex-direction: column;
  padding: 0 6px 6px;
  border: 1px solid #111;
  border-radius: 6px 6px 0 0;
  box-shadow: inset 0 0 0 1px #7fdcf4;
  background: linear-gradient(#96b2d0, #b4cce6 28px, #b8d0ea 110px, #c8def0 115px, #b4cfe8 120px);
}

.dialog-title {
  display: flex;
  align-items: center;
  height: 28px;
  flex: none;
  padding: 5px 3px 0 2px;
}

.dialog-title span {
  flex: 1;
}

.dlg-ic {
  width: 16px;
  height: 14px;
  margin-right: 4px;
}

.dialog-title button {
  width: 31px;
  height: 18px;
  border: 1px solid #52688a;
  border-radius: 2px;
  box-shadow: inset 0 0 0 1px #d0deee;
}

.q {
  margin-right: 2px;
  color: #fff;
  font-weight: bold;
  text-shadow: 0 0 2px #000, 0 0 1px #000;
  background: linear-gradient(#bdd0e6 50%, #95afcd 50%);
}

.dialog-title .x {
  border-color: #501818;
  box-shadow: inset 0 0 0 1px #e8b0a4;
  background: linear-gradient(#e0958a 45%, #c03c28 50%, #d87860);
}

.dialog-body {
  flex: 1;
  display: flex;
  flex-direction: column;
  min-height: 0;
  padding: 6px 8px 8px 3px;
  border-top: 1px solid #8898a8;
  background: #f0f0f0;
}

.dialog-top {
  display: flex;
  align-items: flex-start;
  height: 34px;
  flex: none;
  padding-right: 10px;
}

.tools {
  display: flex;
  margin-left: 1px;
  margin-right: 19px;
  border: 1px solid #000;
  border-right: 0;
}

.tools button {
  width: 23px;
  height: 20px;
  border: 1px solid #808080;
  border-top-color: #fff;
  border-left-color: #fff;
  background: #c0c0c0;
  box-shadow: 1px 0 #000;
}

.tools .down {
  background: #e4e4e4;
}

.tools svg {
  width: 18px;
  height: 16px;
}

.type {
  width: 119px;
  height: 20px;
  padding: 0 2px;
  border: 1px solid #e0e0e4;
  border-top-color: #aaa;
  font-family: "Liberation Sans", sans-serif;
}

.obj-combo {
  flex: 1;
  height: 24px;
  margin-left: 7px;
  padding-left: 1px;
}

.tabs {
  display: flex;
  align-items: flex-end;
  height: 21px;
  flex: none;
}

.tabs button {
  width: 45px;
  height: 19px;
  padding-left: 4px;
  justify-content: flex-start;
  border: 1px solid #8c8f9c;
  border-left: 0;
  border-bottom: 0;
  background: linear-gradient(#f2f2f2 40%, #dadada);
}

.tabs .active {
  position: relative;
  width: 52px;
  height: 21px;
  margin-bottom: -1px;
  padding-left: 7px;
  border-left: 1px solid #8c8f9c;
  background: #f8fcf8;
}

.panel {
  flex: 1;
  min-height: 0;
  padding: 8px 8px 9px 11px;
  border: 1px solid #8c8f9c;
  box-shadow: inset 1px 1px #fff;
}

.split {
  display: flex;
  height: 100%;
  border: 2px solid #666;
  border-right-width: 1px;
  border-bottom-width: 1px;
  background: #f8fcf8;
}

.tree {
  width: 134px;
  padding-left: 8px;
  border-right: 5px solid #f0f0f0;
}

.root {
  display: flex;
  align-items: center;
  height: 20px;
}

.minus {
  width: 9px;
  height: 9px;
  margin-right: 7px;
  border: 1px solid #909090;
  background: linear-gradient(#35a, #35a) center / 5px 1px no-repeat;
}

.tree ul {
  margin: 0 0 0 23px;
  padding: 0;
  list-style: none;
}

.tree li {
  display: flex;
  align-items: center;
  height: 20px;
  background: linear-gradient(#777 50%, transparent 0) 0 0 / 1px 2px repeat-y;
}

.tree li::before {
  content: "";
  width: 10px;
  height: 1px;
  background: repeating-linear-gradient(90deg, #777 0 1px, transparent 1px 2px);
}

.tree li:last-child {
  clip-path: polygon(0 0, 100% 0, 100% 100%, 3px 100%, 3px 11px, 0 11px);
}

.tree li span {
  padding: 2px;
}

.tree li .sel {
  color: #fff;
  background: #3399ff;
}

.list {
  flex: 1;
  border-left: 2px solid #666;
}

table {
  width: 100%;
  table-layout: fixed;
  border-collapse: collapse;
}

.c1 { width: 129px; }
.c2 { width: 104px; }
.c3 { width: 113px; }
.c4 { width: 96px; }
.c5 { width: 20px; }

th {
  height: 23px;
  padding: 2px 0 0;
  font-weight: normal;
  border-right: 1px solid #dde2e6;
  border-bottom: 1px solid #d5d5d5;
  background: linear-gradient(#fbfdfb 45%, #f0f4f4);
  overflow: hidden;
}

th:last-child {
  border-right: 0;
}

.first {
  padding-left: 5px;
  text-align: left;
}

td {
  height: 19px;
  padding: 0 2px;
  white-space: nowrap;
}

td:first-child {
  padding-left: 1px;
}

.color {
  height: 13px;
  border: 1px solid #000;
  background: #808080;
}

.bulb {
  width: 16px;
  height: 16px;
}

td input {
  appearance: none;
  display: block;
  width: 10px;
  height: 11px;
  margin: 0 auto;
  border: 1px solid #000;
  border-top-color: #777;
}

.watermark {
  position: absolute;
  left: 480px;
  top: 374px;
  width: 400px;
  color: #fafcfa;
  text-align: center;
  white-space: nowrap;
  transform: rotate(-29deg);
  -webkit-text-stroke: 3px #ececec;
  paint-order: stroke fill;
  pointer-events: none;
}

.cn {
  font-size: 40px;
  line-height: 44px;
  font-weight: 500;
}

.en {
  font: 27px/28px "Liberation Sans", sans-serif;
}

.cursor {
  position: absolute;
  left: 587px;
  top: 283px;
  width: 12px;
  height: 20px;
}

/* Taskbar */
.taskbar {
  position: relative;
  display: flex;
  align-items: center;
  height: 30px;
  flex: none;
  padding-left: 9px;
  border-top: 1px solid #4a5a6a;
  background: #8093a8;
  color: #fff;
}

.start {
  width: 36px;
  height: 36px;
  margin: -6px 13px 0 0;
}

.start svg {
  width: 36px;
  height: 36px;
}

.dots {
  width: 10px;
  height: 20px;
  background: conic-gradient(from 0deg at 2px 2px, transparent 75%, #44515f 0) 0 0 / 4px 4px;
}

.tasks {
  display: flex;
  gap: 2px;
  margin-left: 7px;
}

.tasks button {
  width: 160px;
  height: 28px;
  gap: 4px;
  padding-left: 9px;
  justify-content: flex-start;
  border: 1px solid #44525f;
  border-radius: 3px;
  box-shadow: inset 0 0 0 1px #b8c4cf;
  background: linear-gradient(150deg, #a8b4c0, #7b8d9f 50%, #8496a8);
}

.tasks .active {
  background: linear-gradient(#c6cfd8, #aebac6 50%, #c0cad2);
}

.tray {
  display: flex;
  align-items: center;
  gap: 8px;
  margin-left: auto;
  margin-right: 12px;
}

.tray svg {
  width: 16px;
  height: 16px;
}

.tray .tight {
  margin-right: -2px;
}

.lang {
  font: 12px/16px "Liberation Mono", monospace;
}

.tray time {
  margin-left: 11px;
}

.peek {
  width: 9px;
  height: 29px;
  border-left: 1px solid #44525f;
  background: linear-gradient(120deg, #b0bcc8, #66788a);
}

/* Player controls */
.controls {
  display: flex;
  height: 18px;
  flex: none;
  border: 1px solid #000;
  background: linear-gradient(#f4f4f4, #c8c8c8);
}

.controls button {
  width: 17px;
  border-right: 1px solid #000;
}

.controls svg {
  width: 16px;
  height: 14px;
}

.track {
  flex: 1;
  display: flex;
  align-items: center;
  padding: 0 3px 0 2px;
  border-left: 2px solid #000;
  border-right: 1px solid #000;
}

.track input {
  appearance: none;
  flex: 1;
  height: 11px;
  border: 1px solid #000;
  background: linear-gradient(#777, #a4a4a4);
}

.track input::-webkit-slider-thumb {
  appearance: none;
  width: 16px;
  height: 9px;
  border: 1px solid #555;
  background: linear-gradient(#fff 35%, #ccc 35% 60%, #fff 60%);
}

.controls output {
  width: 60px;
  font-size: 10px;
  font-weight: 600;
  text-align: center;
  color: #fff;
  background: linear-gradient(#555, #000 60%);
}
```
